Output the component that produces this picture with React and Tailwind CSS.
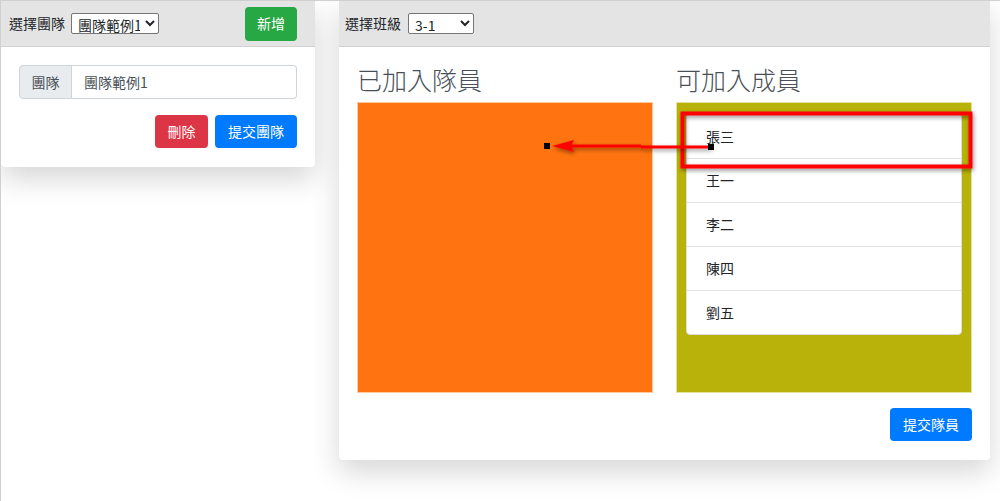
import { useState } from "react";

const members = ["張三", "王一", "李二", "陳四", "劉五"];

function Arrow() {
  return (
    <svg
      className="pointer-events-none absolute left-0 top-0"
      width="1000"
      height="501"
      viewBox="0 0 1000 501"
    >
      <defs>
        <filter id="sh" x="-10%" y="-50%" width="120%" height="200%">
          <feDropShadow dx="1" dy="2" stdDeviation="2" floodColor="#000" floodOpacity="0.45" />
        </filter>
      </defs>
      <rect x="681.5" y="112.5" width="288" height="53" fill="none" stroke="#ff0000" strokeWidth="4" filter="url(#sh)" />
      <g filter="url(#sh)">
        <line x1="710" y1="146" x2="640" y2="146" stroke="#ff0000" strokeWidth="3" />
        <line x1="640" y1="145" x2="565" y2="145" stroke="#ff0000" strokeWidth="3" />
        <path d="M551 145 L573 139 L570 145 L573 151 Z" fill="#ff0000" />
      </g>
      <rect x="543" y="142" width="6" height="6" fill="#000" />
      <rect x="707" y="143" width="6" height="6" fill="#000" />
    </svg>
  );
}

export default function App() {
  const [team, setTeam] = useState("團隊範例1");
  const [klass, setKlass] = useState("3-1");

  return (
    <div
      className="relative h-[501px] w-[1000px] overflow-hidden border-l border-t border-[#d0d0d0] bg-white text-[14px] text-[#212529]"
      style={{ fontFamily: '"Noto Sans CJK TC", "Noto Sans", sans-serif' }}
    >
      <div className="flex items-start gap-[24px]">
        {/* team card */}
        <div className="w-[314px] shrink-0 rounded-b-[4px] bg-white shadow-[0_12px_28px_rgba(0,0,0,0.16)]">
          <div className="flex h-[46px] items-center justify-between border-b border-[#d2d2d2] bg-[#e4e4e4] pl-[8px] pr-[18px]">
            <div className="flex items-center gap-[6px]">
              <span>選擇團隊</span>
              <select
                value={team}
                onChange={(e) => setTeam(e.target.value)}
                className="h-[21px] w-[88px] rounded-[2px] border border-[#767676] bg-white px-[2px] text-[14px] leading-none"
              >
                <option>團隊範例1</option>
              </select>
            </div>
            <button className="h-[34px] w-[52px] rounded-[4px] bg-[#28a745] text-[14px] text-white">
              新增
            </button>
          </div>
          <div className="px-[18px] pb-[19px] pt-[18px]">
            <div className="flex h-[34px]">
              <span className="flex w-[53px] items-center justify-center rounded-l-[4px] border border-[#ced4da] bg-[#e9ecef] text-[#495057]">
                團隊
              </span>
              <input
                value={team}
                onChange={(e) => setTeam(e.target.value)}
                className="min-w-0 flex-1 rounded-r-[4px] border border-l-0 border-[#ced4da] px-[12px] text-[14px] text-[#495057] outline-none"
              />
            </div>
            <div className="mt-[16px] flex justify-end gap-[7px]">
              <button className="h-[33px] w-[53px] rounded-[4px] bg-[#dc3545] text-white">刪除</button>
              <button className="h-[33px] w-[82px] rounded-[4px] bg-[#007bff] text-white">提交團隊</button>
            </div>
          </div>
        </div>

        {/* class card */}
        <div className="w-[651px] shrink-0 rounded-b-[4px] bg-white shadow-[0_12px_28px_rgba(0,0,0,0.16)]">
          <div className="flex h-[46px] items-center gap-[7px] border-b border-[#d2d2d2] bg-[#e4e4e4] pl-[6px]">
            <span>選擇班級</span>
            <select
              value={klass}
              onChange={(e) => setKlass(e.target.value)}
              className="h-[21px] w-[66px] rounded-[2px] border border-[#767676] bg-white px-[2px] text-[14px] leading-none"
            >
              <option>3-1</option>
            </select>
          </div>
          <div className="px-[18px] pb-[19px] pt-[17px]">
            <div className="grid grid-cols-2 gap-[23px]">
              <div>
                <h2 className="mb-[8px] h-[30px] text-[25px] font-light leading-[30px] text-[#495057]">已加入隊員</h2>
                <div className="h-[291px] border border-[#ffc9a0] bg-[#ff7410]" />
              </div>
              <div>
                <h2 className="mb-[8px] h-[30px] text-[25px] font-light leading-[30px] text-[#495057]">可加入成員</h2>
                <div className="h-[291px] border border-[#e4e0a0] bg-[#b8b20a] px-[9px] pt-[10px]">
                  <ul className="overflow-hidden rounded-[4px] border border-[#dcdcdc] bg-white">
                    {members.map((m, i) => (
                      <li
                        key={m}
                        className={`flex h-[44px] items-center pl-[19px] text-[#212529] ${i ? "border-t border-[#e2e2e2]" : ""}`}
                      >
                        {m}
                      </li>
                    ))}
                  </ul>
                </div>
              </div>
            </div>
            <div className="mt-[15px] flex justify-end">
              <button className="h-[33px] w-[82px] rounded-[4px] bg-[#007bff] text-white">提交隊員</button>
            </div>
          </div>
        </div>
      </div>
      <Arrow />
    </div>
  );
}
